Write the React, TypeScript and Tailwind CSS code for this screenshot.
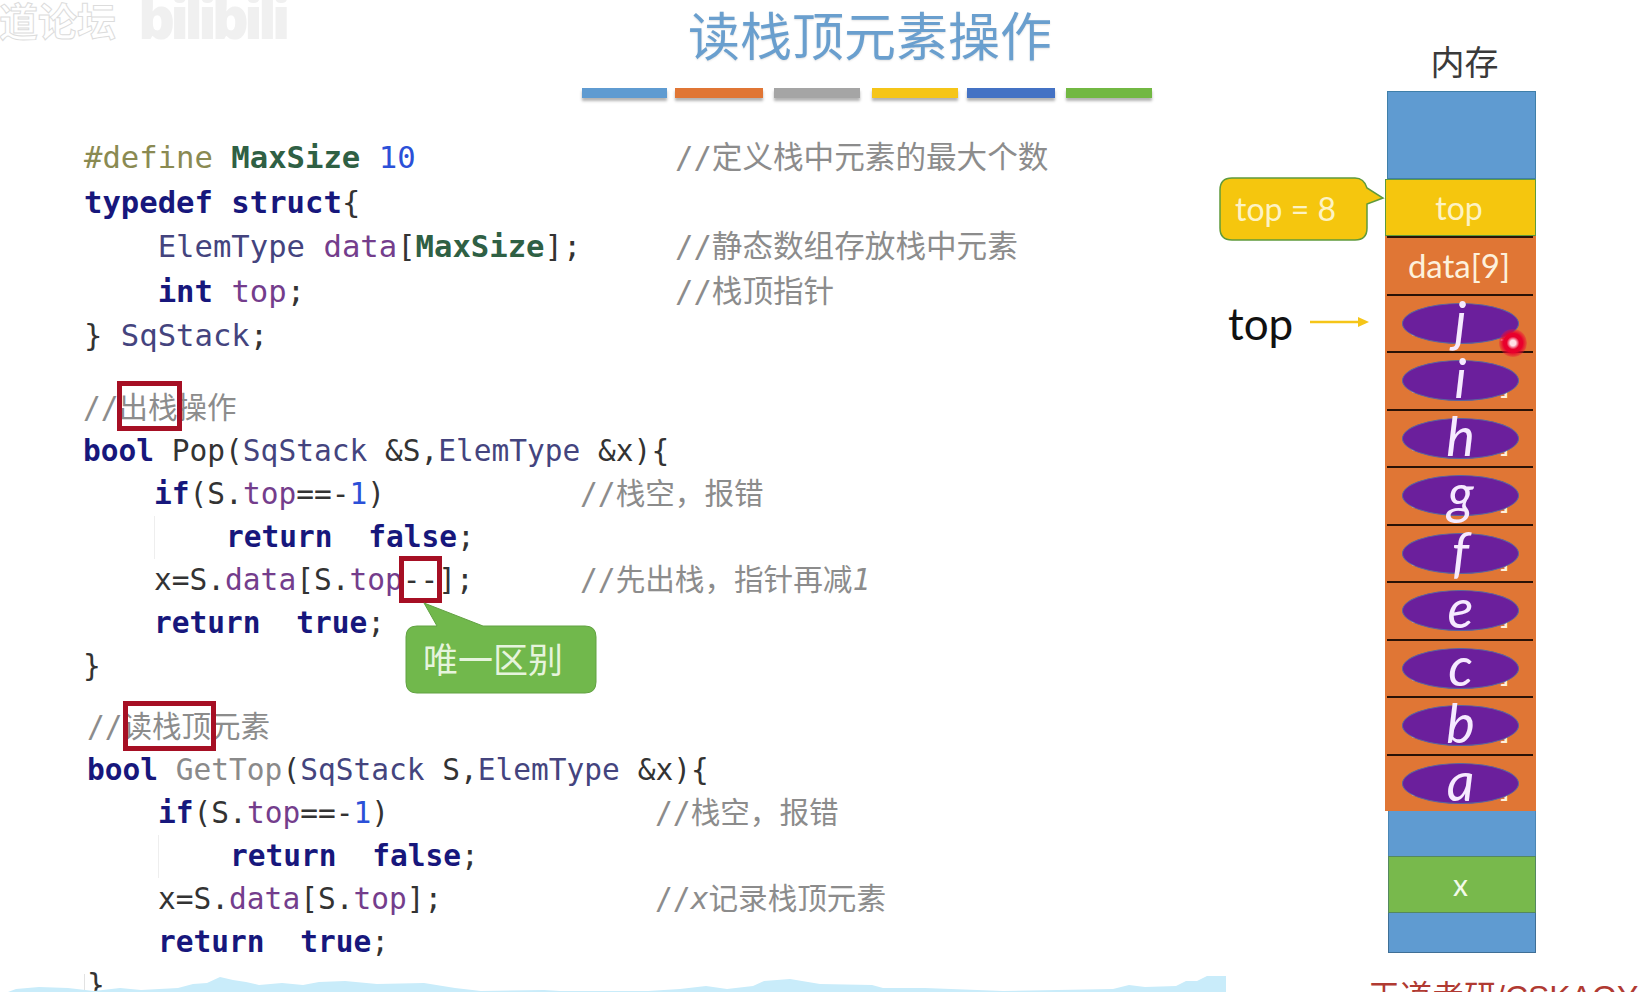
import type { ReactNode } from "react"

const kw = "font-bold text-[#17177c]"
const ty = "text-[#44447e]"
const mem = "text-[#743d8c]"
const mac = "font-bold text-[#2f6044]"
const num = "text-[#2b50d8]"

function K({ children }: { children: ReactNode }) {
    return <span className={kw}>{children}</span>
}
function T({ children }: { children: ReactNode }) {
    return <span className={ty}>{children}</span>
}
function M({ children }: { children: ReactNode }) {
    return <span className={mem}>{children}</span>
}
function N({ children }: { children: ReactNode }) {
    return <span className={num}>{children}</span>
}

function Comment({ children }: { children: ReactNode }) {
    return <span className="text-[#8c8c8c] text-[29.6px]">{children}</span>
}

const rows = [
    { letter: "j", label: "data[8]" },
    { letter: "i", label: "data[7]" },
    { letter: "h", label: "data[6]" },
    { letter: "g", label: "data[5]" },
    { letter: "f", label: "data[4]" },
    { letter: "e", label: "data[3]" },
    { letter: "c", label: "data[2]" },
    { letter: "b", label: "data[1]" },
    { letter: "a", label: "data[0]" },
]

function CodeSection() {
    return (
        <div className="[font-family:'DejaVu_Sans_Mono','Noto_Sans_CJK_SC',monospace] whitespace-pre text-[#333333]">
            {/* struct */}
            <div className="mt-[38px] ml-[84px] text-[30.6px] leading-[44.5px]">
                <div className="flex">
                    <span className="w-[591px]">
                        <span className="text-[#8a8a52]">#define</span> <span className={mac}>MaxSize</span> <N>10</N>
                    </span>
                    <span className="text-[#8c8c8c]">//定义栈中元素的最大个数</span>
                </div>
                <div><K>typedef</K> <K>struct</K>{"{"}</div>
                <div className="flex">
                    <span className="w-[591px]">    <T>ElemType</T> <M>data</M>[<span className={mac}>MaxSize</span>];</span>
                    <span className="text-[#8c8c8c]">//静态数组存放栈中元素</span>
                </div>
                <div className="flex">
                    <span className="w-[591px]">    <K>int</K> <M>top</M>;</span>
                    <span className="text-[#8c8c8c]">//栈顶指针</span>
                </div>
                <div>{"}"} <T>SqStack</T>;</div>
            </div>

            {/* pop */}
            <div className="mt-[28px] ml-[83px] text-[29.5px] leading-[43px]">
                <div className="text-[#8c8c8c]">//出栈操作</div>
                <div><K>bool</K> Pop(<T>SqStack</T> &amp;S,<T>ElemType</T> &amp;x){"{"}</div>
                <div className="flex">
                    <span className="w-[497px]">    <K>if</K>(S.<M>top</M>==-<N>1</N>)</span>
                    <Comment>//栈空，报错</Comment>
                </div>
                <div className="ml-[71px] border-l border-[#eeeeee]">    <K>return</K>  <K>false</K>;</div>
                <div className="flex">
                    <span className="w-[497px]">    x=S.<M>data</M>[S.<M>top</M>--];</span>
                    <Comment>//先出栈，指针再减<i>1</i></Comment>
                </div>
                <div>    <K>return</K>  <K>true</K>;</div>
                <div>{"}"}</div>
            </div>

            {/* get top */}
            <div className="mt-[18px] ml-[87px] text-[29.5px] leading-[43px]">
                <div className="text-[#8c8c8c]">//读栈顶元素</div>
                <div><K>bool</K> <span className="text-[#8a8a8a]">GetTop</span>(<T>SqStack</T> S,<T>ElemType</T> &amp;x){"{"}</div>
                <div className="flex">
                    <span className="w-[568px]">    <K>if</K>(S.<M>top</M>==-<N>1</N>)</span>
                    <Comment>//栈空，报错</Comment>
                </div>
                <div className="ml-[71px] border-l border-[#eeeeee]">    <K>return</K>  <K>false</K>;</div>
                <div className="flex">
                    <span className="w-[568px]">    x=S.<M>data</M>[S.<M>top</M>];</span>
                    <Comment>//<i>x</i>记录栈顶元素</Comment>
                </div>
                <div>    <K>return</K>  <K>true</K>;</div>
                <div>{"}"}</div>
            </div>
        </div>
    )
}

function MemoryColumn() {
    return (
        <div className="relative w-[451px] h-full pl-[195px] [font-family:Lato,'Noto_Sans_CJK_SC',sans-serif]">
            <div className="h-[91px] w-[151px] pt-[39px] pl-[8px] text-center text-[34px] leading-[44px] text-[#3a3a3a] [font-family:'Noto_Sans_CJK_SC',sans-serif]">
                内存
            </div>

            <div className="w-[151px] flex flex-col text-[33px] text-[#fdf1dc]">
                <div className="ml-[2px] h-[88px] bg-[#5f9bd1] border border-[#3f7fa9]" />
                <div className="h-[57px] bg-[#f5c60e] border-[1.5px] border-[#5f9a3c] flex items-center justify-center text-[#fdf3c4] text-[32px] pr-[3px]">top</div>
                <div className="bg-[#e07635] px-[2px] pr-[3px]">
                    <div className="h-[57.5px] border-t-2 border-[#2a1206] flex items-center justify-center pr-[2px]">data[9]</div>
                    {rows.map((r) => (
                        <div key={r.letter} className="relative h-[57.5px] border-t-2 border-[#2a1206] flex items-center justify-center pr-[2px]">
                            {r.label}
                            <div className="absolute left-[15px] top-[7px] w-[117px] h-[41px] rounded-[50%] bg-[#6b1f9c] border border-[#59659f] flex items-center justify-center text-[54px] italic leading-none text-[#f6eaff] pb-[5px]">
                                {r.letter}
                            </div>
                        </div>
                    ))}
                </div>
                <div className="ml-[3px] h-[45px] bg-[#5f9bd1] border-x border-[#4a86b5]" />
                <div className="ml-[3px] h-[57px] bg-[#78b94c] border border-[#54885f] flex items-center justify-center text-[#f2fae9] text-[30px] pr-[3px]">x</div>
                <div className="ml-[3px] h-[40px] bg-[#5f9bd1] border border-t-0 border-[#3f6f96]" />
            </div>

            {/* callout top = 8 */}
            <div className="absolute left-[29px] top-[177px] w-[168px] h-[64px]">
                <svg width="168" height="64" viewBox="0 0 168 64" className="absolute inset-0">
                    <path d="M13 1 H136 Q145 1 148 11 L164 21 L148 27 V51 Q148 63 136 63 H13 Q1 63 1 51 V13 Q1 1 13 1 Z" fill="#f5c60e" stroke="#5f9a3c" strokeWidth="1.5" />
                </svg>
                <div className="absolute left-[16px] top-[13px] text-[32px] leading-[38px] text-[#fdf3c4] whitespace-pre">top = 8</div>
            </div>

            {/* top pointer */}
            <div className="absolute left-[38px] top-[298px] text-[44px] leading-[50px] text-[#111111]">top</div>
            <svg width="60" height="12" viewBox="0 0 60 12" className="absolute left-[120px] top-[316px]">
                <path d="M0 6 H50" stroke="#f5c518" strokeWidth="2.5" />
                <path d="M48 1 L59 6 L48 11 Z" fill="#f5c518" />
            </svg>

            {/* laser pointer */}
            <div className="absolute left-[309px] top-[329px] w-[28px] h-[28px] rounded-full bg-[radial-gradient(circle,#ffe0e6_0%,#ffe0e6_14%,#e8002c_32%,#e8002c_48%,rgba(240,30,60,0.25)_72%,rgba(240,30,60,0)_100%)]" />

            <div className="absolute left-[178px] top-[977px] text-[32px] leading-[40px] text-[#b03a32] whitespace-pre [font-family:'Liberation_Sans','Noto_Sans_CJK_SC',sans-serif]">王道考研/CSKAOYAN.COM</div>
        </div>
    )
}

export default function App() {
    return (
        <div className="relative w-[1641px] h-[992px] overflow-hidden bg-white flex">
            <div className="w-[1190px] shrink-0">
                <div className="ml-[582px] w-[570px] flex flex-col items-center pt-[5px]">
                    <h1 className="ml-[6px] text-[52px] leading-[58px] text-[#6a9fce] whitespace-nowrap [font-family:'Noto_Sans_CJK_SC',sans-serif] [text-shadow:0_1px_2px_rgba(0,0,0,0.12)]">
                        读栈顶元素操作
                    </h1>
                    <div className="mt-[25px] w-full flex">
                        <div className="w-[85px] h-[10px] bg-[#5f9bd1] shadow-[0_3px_3px_rgba(0,0,0,0.3)]" />
                        <div className="ml-[8px] w-[88px] h-[10px] bg-[#e07635] shadow-[0_3px_3px_rgba(0,0,0,0.3)]" />
                        <div className="ml-[11px] w-[86px] h-[10px] bg-[#a5a5a5] shadow-[0_3px_3px_rgba(0,0,0,0.3)]" />
                        <div className="ml-[12px] w-[86px] h-[10px] bg-[#f5c518] shadow-[0_3px_3px_rgba(0,0,0,0.3)]" />
                        <div className="ml-[9px] w-[88px] h-[10px] bg-[#4472c4] shadow-[0_3px_3px_rgba(0,0,0,0.3)]" />
                        <div className="ml-[11px] w-[86px] h-[10px] bg-[#72b843] shadow-[0_3px_3px_rgba(0,0,0,0.3)]" />
                    </div>
                </div>
                <CodeSection />
            </div>

            <MemoryColumn />

            {/* video watermark */}
            <div className="absolute left-[-1px] top-[-4px] text-[39px] leading-[46px] font-bold text-white [font-family:'Noto_Sans_CJK_SC',sans-serif] [-webkit-text-stroke:1px_#dcdcdc]">道论坛</div>
            <div className="absolute left-[138px] top-[-12px] text-[58px] leading-[58px] font-extrabold tracking-[-5px] text-[#f0f0f0] [font-family:'Open_Sans',sans-serif]">bilibili</div>

            {/* highlight boxes */}
            <div className="absolute left-[117px] top-[381px] w-[65px] h-[50px] border-[5px] border-[#a60f24]" />
            <div className="absolute left-[399px] top-[556px] w-[43px] h-[47px] border-[5px] border-[#a60f24]" />
            <div className="absolute left-[123px] top-[701px] w-[93px] h-[50px] border-[5px] border-[#a60f24]" />

            {/* green callout */}
            <div className="absolute left-[405px] top-[602px] w-[192px] h-[93px]">
                <svg width="192" height="93" viewBox="0 0 192 93" className="absolute inset-0">
                    <path d="M19 1 L78 24 H180 Q191 24 191 35 V80 Q191 91 180 91 H12 Q1 91 1 80 V35 Q1 24 12 24 H32 Z" fill="#71b84c" stroke="#62a243" strokeWidth="1" />
                </svg>
                <div className="absolute left-[18px] top-[32px] text-[35px] leading-[48px] text-[#e6f4dd] whitespace-nowrap [font-family:'Noto_Sans_CJK_SC',sans-serif]">唯一区别</div>
            </div>

            {/* stray line left of the last brace */}
            <div className="absolute left-[84px] top-[974px] w-px h-[18px] bg-[#e2e2e2]" />

            {/* background wave */}
            <svg width="1226" height="16" viewBox="0 976 1226 16" className="absolute left-0 bottom-0">
                <path d="M8 992 L16 989 L39 987 L68 988 L94 991 L120 988 L141 990 L178 988 L193 984 L207 983 L220 977 L233 980 L246 982 L259 985 L282 983 L303 985 L319 982 L345 981 L377 984 L424 983 L455 988 L481 991 L544 990 L560 991 L648 991 L680 989 L706 986 L727 989 L753 986 L764 981 L790 979 L820 984 L872 985 L883 988 L925 988 L1003 991 L1113 989 L1129 985 L1145 987 L1176 986 L1186 981 L1197 981 L1207 976 L1226 976 V992 Z" fill="#c9ecfa" />
            </svg>
        </div>
    )
}
